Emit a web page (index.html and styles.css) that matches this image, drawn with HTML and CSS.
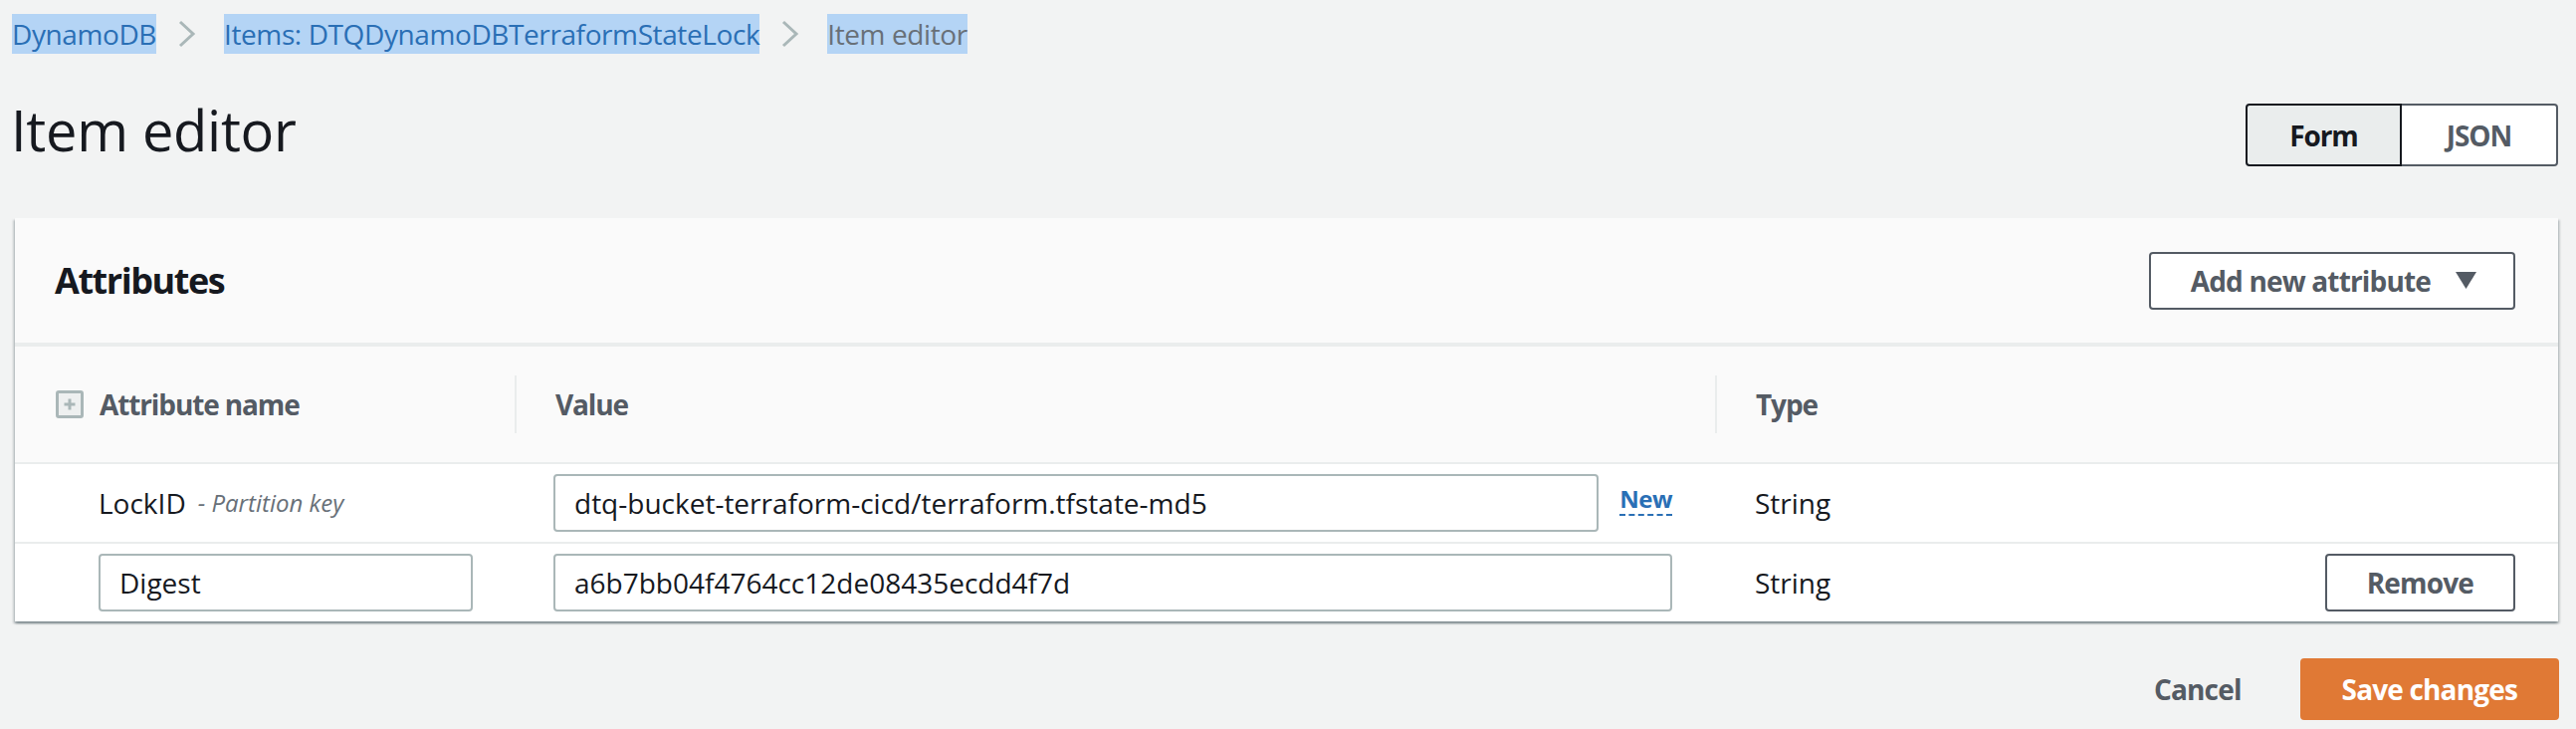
FILE: index.html
```html
<!DOCTYPE html>
<html lang="en">
<head>
<meta charset="utf-8">
<title>Item editor</title>
<link rel="stylesheet" href="styles.css">
</head>
<body>
<div class="page">
  <nav class="breadcrumbs">
    <a class="crumb link">DynamoDB</a>
    <svg class="chev" width="19" height="28" viewBox="0 0 19 28"><path d="M3 2 L16 14 L3 26" fill="none" stroke="#aab7b8" stroke-width="3"/></svg>
    <a class="crumb link">Items: DTQDynamoDBTerraformStateLock</a>
    <svg class="chev" width="19" height="28" viewBox="0 0 19 28"><path d="M3 2 L16 14 L3 26" fill="none" stroke="#aab7b8" stroke-width="3"/></svg>
    <span class="crumb current">Item editor</span>
  </nav>

  <div class="titlebar">
    <h1 class="title">Item editor</h1>
    <div class="segmented">
      <button class="seg seg-active">Form</button>
      <button class="seg seg-idle">JSON</button>
    </div>
  </div>

  <section class="card">
    <header class="card-head">
      <h2 class="card-title">Attributes</h2>
      <button class="btn btn-normal">Add new attribute
        <svg class="caret" width="21" height="17" viewBox="0 0 21 17"><path d="M0 0 H21 L10.5 17 Z" fill="#545b64"/></svg>
      </button>
    </header>

    <div class="grid">
      <div class="row row-head">
        <div class="cell head-first">
          <svg class="expand" width="28" height="28" viewBox="0 0 28 28"><rect x="1.5" y="1.5" width="25" height="25" rx="1.5" fill="#eef0f0" stroke="#aab7b8" stroke-width="3"/><path d="M14 8.5 V19.5 M8.5 14 H19.5" stroke="#aab7b8" stroke-width="3"/></svg>
          <span class="th">Attribute name</span>
        </div>
        <div class="cell"><span class="th th-div">Value</span></div>
        <div class="cell"><span class="th th-div">Type</span></div>
      </div>

      <div class="row">
        <div class="cell cell-first">
          <span class="name">LockID</span><span class="key">- Partition key</span>
        </div>
        <div class="cell cell-value">
          <input class="input grow" type="text" value="dtq-bucket-terraform-cicd/terraform.tfstate-md5">
          <a class="newtag">New</a>
        </div>
        <div class="cell cell-type"><span class="type">String</span></div>
      </div>

      <div class="row">
        <div class="cell cell-first">
          <input class="input name-input" type="text" value="Digest">
        </div>
        <div class="cell cell-value">
          <input class="input grow" type="text" value="a6b7bb04f4764cc12de08435ecdd4f7d">
        </div>
        <div class="cell cell-type">
          <span class="type">String</span>
          <button class="btn btn-normal btn-remove">Remove</button>
        </div>
      </div>
    </div>
  </section>

  <div class="footer">
    <button class="btn-link">Cancel</button>
    <button class="btn btn-primary">Save changes</button>
  </div>
</div>
</body>
</html>
```

FILE: styles.css
```css
html, body {
  margin: 0;
  padding: 0;
  background: #f2f3f3;
}

body {
  font-family: "Open Sans", "Noto Sans", sans-serif;
  font-size: 28px;
  line-height: 40px;
  color: #16191f;
}

.page {
  padding: 14px 18px 0 15px;
}

/* breadcrumbs */
.breadcrumbs {
  display: flex;
  align-items: center;
  height: 40px;
  margin-left: -3px;
}

.crumb {
  display: inline-block;
  line-height: 40px;
  letter-spacing: -0.4px;
  background: #b4d4f5;
}

.link {
  color: #2a6fb5;
  text-decoration: none;
}

.current {
  color: #687078;
}

.chev {
  margin: 0 28px 0 21px;
  flex: none;
}

/* title */
.titlebar {
  display: flex;
  align-items: flex-end;
  justify-content: space-between;
  margin-top: 36px;
}

.title {
  margin: 0 0 0 -4px;
  font-size: 56px;
  line-height: 80px;
  font-weight: 400;
  letter-spacing: -0.3px;
  color: #16191f;
}

.segmented {
  display: flex;
  margin-bottom: 3px;
}

.seg {
  width: 157px;
  height: 63px;
  font-family: inherit;
  font-size: 28px;
  font-weight: 700;
  letter-spacing: -0.04em;
  padding: 0;
  cursor: pointer;
}

.seg-active {
  background: #eaeded;
  color: #16191f;
  border: 2px solid #16191f;
  border-radius: 4px 0 0 4px;
}

.seg-idle {
  background: #ffffff;
  color: #545b64;
  border: 2px solid #545b64;
  border-left: none;
  border-radius: 0 4px 4px 0;
}

/* card */
.card {
  margin-top: 49px;
  background: #ffffff;
  box-shadow: 0 2px 2px rgba(0, 28, 36, 0.3), 2px 2px 2px rgba(0, 28, 36, 0.15), -2px 2px 2px rgba(0, 28, 36, 0.15);
}

.card-head {
  display: flex;
  align-items: center;
  justify-content: space-between;
  height: 125px;
  padding: 0 43px 0 40px;
  background: #fafafa;
  border-bottom: 4px solid #eaeded;
}

.card-title {
  margin: 0;
  font-size: 36px;
  line-height: 50px;
  font-weight: 700;
  letter-spacing: -0.04em;
  color: #16191f;
}

.btn {
  font-family: inherit;
  font-size: 28px;
  line-height: 40px;
  font-weight: 700;
  letter-spacing: -0.03em;
  border-radius: 4px;
  cursor: pointer;
}

.btn-normal {
  display: flex;
  align-items: center;
  background: #ffffff;
  color: #545b64;
  border: 2px solid #545b64;
  padding: 7px 37px 7px 40px;
}

.caret {
  margin-left: 25px;
}

.btn-remove {
  padding: 7px 40px;
  margin-left: auto;
}

.btn-primary {
  background: #e07935;
  color: #ffffff;
  border: 2px solid #e07935;
  padding: 9px 40px;
}

.btn-link {
  background: none;
  border: none;
  padding: 0;
  font-family: inherit;
  font-size: 28px;
  line-height: 40px;
  font-weight: 700;
  letter-spacing: -0.03em;
  color: #545b64;
  margin-right: 59px;
  cursor: pointer;
}

/* grid */
.row {
  display: grid;
  grid-template-columns: 502px 1206px 1fr;
  align-items: center;
  height: 78px;
  border-top: 2px solid #eaeded;
}

.row-head {
  height: 116px;
  border-top: none;
  background: #fafafa;
}

.cell {
  display: flex;
  align-items: center;
  min-width: 0;
}

.head-first {
  padding-left: 41px;
}

.expand {
  flex: none;
  margin-right: 16px;
}

.th {
  font-weight: 700;
  letter-spacing: -0.04em;
  color: #545b64;
}

.th-div {
  display: flex;
  align-items: center;
  height: 58px;
  border-left: 2px solid #eaeded;
  padding-left: 39px;
}

.cell-first {
  padding-left: 84px;
}

.name {
  color: #16191f;
}

.key {
  margin-left: 12px;
  font-size: 24px;
  font-style: italic;
  color: #687078;
}

.cell-value {
  padding-left: 39px;
  padding-right: 43px;
}

.input {
  box-sizing: border-box;
  height: 58px;
  border: 2px solid #aab7b8;
  border-radius: 4px;
  background: #ffffff;
  padding: 0 19px;
  font-family: inherit;
  font-size: 28px;
  color: #16191f;
  outline: none;
}

.grow {
  flex: 1;
  min-width: 0;
}

.name-input {
  width: 376px;
}

.newtag {
  margin-left: 21px;
  margin-bottom: 6px;
  font-size: 24px;
  line-height: 30px;
  font-weight: 700;
  letter-spacing: -0.02em;
  color: #2a6fb5;
  border-bottom: 2px dashed #2a6fb5;
}

.cell-type {
  padding-left: 40px;
  padding-right: 43px;
}

.type {
  color: #16191f;
}

/* footer */
.footer {
  display: flex;
  align-items: center;
  justify-content: flex-end;
  margin-top: 37px;
  margin-right: -1px;
}
```
